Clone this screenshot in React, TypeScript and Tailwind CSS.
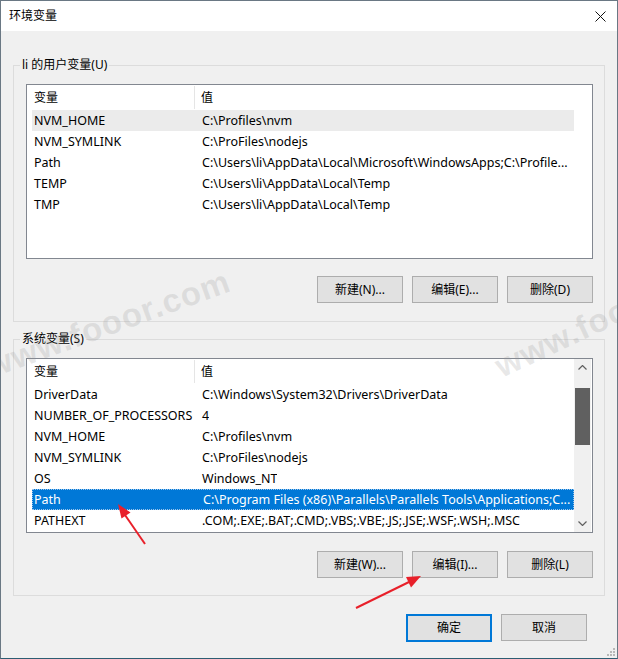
import React from "react";

const UI_FONT = "font-['Segoe_UI','Noto_Sans','Noto_Sans_CJK_SC',sans-serif]";

type Row = { name: string; value: string };

const USER_VARS: Row[] = [
  { name: "NVM_HOME", value: "C:\\Profiles\\nvm" },
  { name: "NVM_SYMLINK", value: "C:\\ProFiles\\nodejs" },
  { name: "Path", value: "C:\\Users\\li\\AppData\\Local\\Microsoft\\WindowsApps;C:\\Profile..." },
  { name: "TEMP", value: "C:\\Users\\li\\AppData\\Local\\Temp" },
  { name: "TMP", value: "C:\\Users\\li\\AppData\\Local\\Temp" },
];

const SYSTEM_VARS: Row[] = [
  { name: "DriverData", value: "C:\\Windows\\System32\\Drivers\\DriverData" },
  { name: "NUMBER_OF_PROCESSORS", value: "4" },
  { name: "NVM_HOME", value: "C:\\Profiles\\nvm" },
  { name: "NVM_SYMLINK", value: "C:\\ProFiles\\nodejs" },
  { name: "OS", value: "Windows_NT" },
  { name: "Path", value: "C:\\Program Files (x86)\\Parallels\\Parallels Tools\\Applications;C..." },
  { name: "PATHEXT", value: ".COM;.EXE;.BAT;.CMD;.VBS;.VBE;.JS;.JSE;.WSF;.WSH;.MSC" },
];

function Chevron({ up }: { up?: boolean }) {
  return (
    <svg width="9" height="5" viewBox="0 0 9 5">
      <polyline
        points={up ? "0.5,4.5 4.5,0.5 8.5,4.5" : "0.5,0.5 4.5,4.5 8.5,0.5"}
        fill="none"
        stroke="#606060"
        strokeWidth="1.2"
      />
    </svg>
  );
}

function ScrollBar() {
  return (
    <div className="w-[17px] mr-[1px] bg-[#f0f0f0] flex flex-col">
      <div className="h-[17px] flex items-center justify-center">
        <Chevron up />
      </div>
      <div className="flex-1 px-[1px]">
        <div className="mt-[12px] h-[57px] bg-[#606060]" />
      </div>
      <div className="h-[17px] flex items-center justify-center">
        <Chevron />
      </div>
    </div>
  );
}

function ListView({
  rows,
  hover,
  selected,
  scroll,
}: {
  rows: Row[];
  hover?: number;
  selected?: number;
  scroll?: boolean;
}) {
  return (
    <div className="h-[175px] border border-[#828790] bg-white flex">
      <div className="flex-1 min-w-0 pl-[5px] overflow-hidden">
        <div className="h-[25px] flex items-center">
          <div className="w-[163px] h-[23px] pl-[2px] flex items-center border-r border-[#e5e5e5]">变量</div>
          <div className="pl-[6px]">值</div>
        </div>
        {rows.map((r, i) => {
          const isSel = i === selected;
          const isHover = i === hover;
          return (
            <div
              key={r.name}
              className={`h-[21px] pt-[1px] flex items-center whitespace-nowrap text-[12.5px] ${
                isSel
                  ? "bg-[#0078d7] text-white border border-dotted border-[#9cc4ea]"
                  : isHover
                    ? "bg-[#ebebeb]"
                    : ""
              }`}
            >
              <div className={`w-[164px] shrink-0 overflow-hidden ${isSel ? "pl-[1px]" : "pl-[2px]"}`}>{r.name}</div>
              <div className="pl-[6px] overflow-hidden">{r.value}</div>
            </div>
          );
        })}
      </div>
      {scroll ? <ScrollBar /> : <div className="w-[18px]" />}
    </div>
  );
}

function Btn({ children, primary }: { children: React.ReactNode; primary?: boolean }) {
  return (
    <button
      className={`w-[86px] flex items-center justify-center bg-[#e1e1e1] text-[12px] text-black ${
        primary ? "h-[28px] border-2 border-[#0078d7]" : "h-[27px] border border-[#adadad]"
      }`}
    >
      {children}
    </button>
  );
}

function Group({
  title,
  children,
  className,
}: {
  title: string;
  children: React.ReactNode;
  className: string;
}) {
  return (
    <fieldset className={`mx-[12px] border border-[#dcdcdc] pl-[6px] pr-[11px] pt-[11px] ${className}`}>
      <legend className="px-[2px] leading-[16px]">{title}</legend>
      <div className="pl-[6px]">{children}</div>
    </fieldset>
  );
}

export default function App() {
  return (
    <div
      className={`relative w-[618px] h-[659px] overflow-hidden border border-[#6a7884] border-b-[#2d5d72] bg-[#f0f0f0] flex flex-col text-[12px] text-black ${UI_FONT}`}
    >
      {/* title bar */}
      <div className="h-[30px] shrink-0 bg-white flex items-center justify-between pl-[8px] pr-[11px]">
        <span>环境变量</span>
        <svg width="11" height="11" viewBox="0 0 11 11">
          <path d="M0.5 0.5 L10.5 10.5 M10.5 0.5 L0.5 10.5" stroke="#111" strokeWidth="1" />
        </svg>
      </div>

      <Group title="li 的用户变量(U)" className="mt-[26px] pb-[18px]">
        <ListView rows={USER_VARS} hover={0} />
        <div className="mt-[17px] flex justify-end gap-[9px]">
          <Btn>新建(N)...</Btn>
          <Btn>编辑(E)...</Btn>
          <Btn>删除(D)</Btn>
        </div>
      </Group>

      <Group title="系统变量(S)" className="mt-[9px] pb-[17px]">
        <ListView rows={SYSTEM_VARS} selected={5} scroll />
        <div className="mt-[18px] flex justify-end gap-[9px]">
          <Btn>新建(W)...</Btn>
          <Btn>编辑(I)...</Btn>
          <Btn>删除(L)</Btn>
        </div>
      </Group>

      <div className="mt-[18px] pr-[30px] flex justify-end gap-[9px]">
        <Btn primary>确定</Btn>
        <Btn>取消</Btn>
      </div>

      {/* watermark */}
      <div className="pointer-events-none absolute left-[-14px] top-[342px] origin-left -rotate-[20deg] text-[33px] font-bold tracking-[1px] text-[rgba(150,150,150,0.22)] font-['Liberation_Sans',Arial,sans-serif] whitespace-nowrap">
        www.fooor.com
      </div>
      <div className="pointer-events-none absolute left-[496px] top-[342px] origin-left -rotate-[25deg] text-[33px] font-bold tracking-[1px] text-[rgba(150,150,150,0.22)] font-['Liberation_Sans',Arial,sans-serif] whitespace-nowrap">
        www.fooor.com
      </div>

      {/* annotation arrows */}
      <svg className="pointer-events-none absolute left-0 top-0" width="618" height="659">
        <line x1="144" y1="543" x2="124" y2="514" stroke="#e8202a" strokeWidth="2" />
        <polygon points="117,503 129.5,511.5 120.5,517.5" fill="#e8202a" />
        <line x1="355" y1="607" x2="408" y2="581" stroke="#e8202a" strokeWidth="2" />
        <polygon points="420,575 410,586.5 405,576" fill="#e8202a" />
      </svg>

      {/* resize grip */}
      <svg className="pointer-events-none absolute right-[2px] bottom-[2px]" width="10" height="10" viewBox="0 0 10 10">
        {[
          [8, 2],
          [8, 5],
          [5, 5],
          [8, 8],
          [5, 8],
          [2, 8],
        ].map(([x, y]) => (
          <rect key={`${x}-${y}`} x={x} y={y} width="2" height="2" fill="#b8b8b8" />
        ))}
      </svg>
    </div>
  );
}
